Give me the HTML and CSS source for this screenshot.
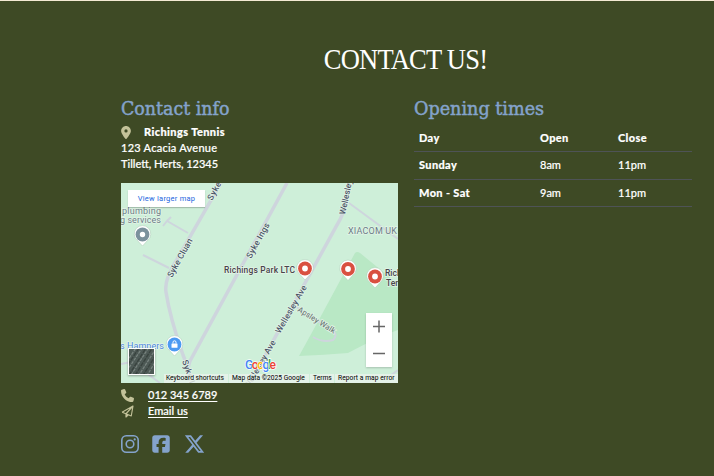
FILE: index.html
```html
<!DOCTYPE html>
<html lang="en">
<head>
<meta charset="utf-8">
<title>Contact us</title>
<link rel="stylesheet" href="styles.css">
</head>
<body>
<section class="contact">
  <h1>CONTACT US!</h1>
  <div class="columns">
    <div class="info">
      <h2 class="info-title">Contact info</h2>
      <address>
        <div class="line"><svg class="icon pin" viewBox="0 0 384 512"><path d="M215.700 499.200C267 435 384 279.400 384 192C384 86 298 0 192 0S0 86 0 192c0 87.400 117 243 168.300 307.200c12.300 15.300 35.100 15.300 47.400 0zM192 128a64 64 0 1 1 0 128 64 64 0 1 1 0-128z"/></svg><strong>Richings Tennis</strong></div>
        <div class="line"><span class="street">123 Acacia Avenue</span></div>
        <div class="line"><span class="town">Tillett, Herts, 12345</span></div>
      </address>
      <div class="map">
        <svg class="map-art" viewBox="121 183 277 200">
          <rect x="121" y="183" width="277" height="200" fill="#ceefd9"/>
          <path d="M355 253q2-2 5 0l38 31v46q-18 6-50 23q-24 2-49 3l22-40z" fill="#b9e8c5"/>
          <g class="roads">
            <path d="M221 183L176 261Q164 280 166 292Q170 318 183 355Q187 365 191 376"/>
            <path d="M287 183L190 361Q186 370 191 383"/>
            <path d="M348 183L347 198Q345 212 337 225L250 383"/>
            <path class="minor" d="M349 203L398 239M188 233L167 221L163 226M167 221L171 217M169 268L143 255M292 304L319 322Q342 332 333 340Q323 343 313 337M121 364l16-3M145 372l15 11M390 376l8-6"/>
          </g>
          <g class="street-name">
            <text transform="translate(212 201) rotate(-61)" textLength="31">Syke Cl</text>
            <text transform="translate(172 278) rotate(-61)" textLength="43">Syke Cluan</text>
            <text transform="translate(251 259) rotate(-61)" textLength="39">Syke Ings</text>
            <text transform="translate(345 215) rotate(-78)" textLength="47">Wellesley Av</text>
            <text transform="translate(280 334) rotate(-60)" textLength="54">Wellesley Ave</text>
            <text transform="translate(249 389) rotate(-60)" textLength="54">Wellesley Ave</text>
            <text transform="translate(182 361) rotate(71)" textLength="39">Syke Ings</text>
            <text class="gray" transform="translate(297 311) rotate(32)" textLength="43">Apsley Walk</text>
          </g>
          <g class="place">
            <text x="122" y="214" textLength="39">plumbing</text>
            <text x="120" y="223" textLength="41">g services</text>
            <text class="xia" x="348" y="234" textLength="49">XIACOM UK</text>
            <text class="dark" x="224" y="273" textLength="71">Richings Park LTC</text>
            <text class="dark" x="385" y="276">Richings</text>
            <text class="dark" x="386" y="286">Tennis</text>
            <text class="blue" x="120" y="349" textLength="44">s Hampers</text>
          </g>
          <defs>
            <g id="marker"><path d="M0 11L-5 5.500A8.300 8.300 0 1 1 5 5.500z" fill="#fff" stroke="#a8c9b2" stroke-width=".5"/><circle r="6.900" cy="-.5"/></g>
          </defs>
          <g fill="#7b919c"><use href="#marker" x="142.500" y="235"/></g>
          <g fill="#d95040"><use href="#marker" x="305" y="269"/><use href="#marker" x="348" y="269.500"/><use href="#marker" x="375" y="277"/></g>
          <g fill="#4c9af2"><use href="#marker" x="174.500" y="345"/></g>
          <g fill="#fff"><circle cx="142.500" cy="234.500" r="2.700"/><circle cx="305" cy="268.500" r="2.900"/><circle cx="348" cy="269" r="2.900"/><circle cx="375" cy="276.500" r="2.900"/><rect x="171.500" y="343.500" width="6" height="4.200" rx=".5"/></g>
          <path d="M173 343.500v-1.200a1.500 1.500 0 0 1 3 0v1.200" fill="none" stroke="#fff"/>
          <text class="google" x="245" y="369" textLength="31"><tspan fill="#4285f4">G</tspan><tspan fill="#ea4335">o</tspan><tspan fill="#fbbc05">o</tspan><tspan fill="#4285f4">g</tspan><tspan fill="#34a853">l</tspan><tspan fill="#ea4335">e</tspan></text>
        </svg>
        <a class="larger">View larger map</a>
        <svg class="satellite" viewBox="0 0 24 24"><path fill="#4d5955" d="M0 0h24v24H0z"/><path d="M-2 12L8-3M-2 21L14-3M2 25L20-3M9 26L25 1M17 26L26 11" stroke="#78837f" stroke-width="1.200" stroke-dasharray="3 1"/><path d="M-1 15L11-3M0 25L17-2M6 25L23-2M13 26L25 7" stroke="#39433f" stroke-width="1.300" stroke-dasharray="4 1"/></svg>
        <div class="zoom"><svg viewBox="0 0 26 54"><path d="M7 13.500h12M13 7.500v12M7 40.500h12" stroke="#666" stroke-width="1.500"/></svg></div>
        <div class="legal"><span class="keys">Keyboard shortcuts</span><span class="data">Map data ©2025 Google</span><span class="terms">Terms</span><span class="report">Report a map error</span></div>
      </div>
      <div class="line link"><svg class="icon phone" viewBox="0 0 512 512"><path transform="matrix(-1 0 0 1 512 0) matrix(-1 0 0 1 512 0)" d="M164.900 24.600c-7.700-18.600-28-28.500-47.400-23.200l-88 24C12.100 30.200 0 46 0 64C0 311.400 200.600 512 448 512c18 0 33.800-12.100 38.600-29.500l24-88c5.300-19.400-4.600-39.700-23.200-47.400l-96-40c-16.300-6.800-35.200-2.100-46.300 11.600L304.700 368C234.300 334.700 177.300 277.700 144 207.300L193.300 167c13.700-11.200 18.400-30 11.600-46.300l-40-96z"/></svg><a class="tel">012 345 6789</a></div>
      <div class="line link"><svg class="icon phone" viewBox="0 0 26 26"><path d="M2 14.500L24 2L20.500 22L10 17.500V24L14.500 19.500M2 14.500L10 17.500L24 2" fill="none" stroke="#c3c299" stroke-width="2.300" stroke-linejoin="round"/></svg><a class="email">Email us</a></div>
      <div class="social">
        <svg viewBox="0 0 18 18"><rect x=".8" y=".8" width="16.400" height="16.400" rx="4.500" fill="none" stroke="#84a3cb" stroke-width="1.600"/><circle cx="9" cy="9" r="3.800" fill="none" stroke="#84a3cb" stroke-width="1.600"/><circle cx="13.700" cy="4.400" r="1.100"/></svg>
        <svg viewBox="0 0 448 512" class="fb"><path d="M64 32C28.700 32 0 60.700 0 96v320c0 35.300 28.700 64 64 64h98.200V334.200h-52.800V256h52.800v-33.700c0-87.100 39.400-127.500 125-127.500c16.200 0 44.200 3.200 55.700 6.400V172c-6-.6-16.500-1-29.600-1c-42 0-58.200 15.900-58.200 57.200V256h83.600l-14.400 78.200h-69.300V480H384c35.300 0 64-28.700 64-64V96c0-35.300-28.700-64-64-64z"/></svg>
        <svg viewBox="30 46 452 420" class="x"><path d="M389.200 48h70.600L305.600 224.200 487 464H345L233.700 318.600 106.500 464H35.800L200.700 275.500 26.800 48h145.600l100.500 132.900zm-24.800 373.800h39.100L151.100 88h-42z"/></svg>
      </div>
    </div>
    <div class="times">
      <h2 class="times-title">Opening times</h2>
      <table>
        <thead><tr><th class="c1">Day</th><th class="c2">Open</th><th>Close</th></tr></thead>
        <tbody>
          <tr><th>Sunday</th><td>8am</td><td>11pm</td></tr>
          <tr><th>Mon - Sat</th><td>9am</td><td>11pm</td></tr>
        </tbody>
      </table>
    </div>
  </div>
</section>
</body>
</html>
```
FILE: styles.css
```css
* { box-sizing: border-box; }
body { margin: 0; height: 476px; overflow: hidden; background: #3e4a25; border-top: 1px solid #f4ead4; color: #fff; font: 11px/16px Lato, "Open Sans", sans-serif; }
.contact { width: 571px; margin-left: 121px; padding-top: 39px; }
h1, h2 { margin: 0; font-family: "Liberation Serif", serif; font-weight: 400; }
h1 { height: 39px; font-size: 30px; line-height: 38px; text-align: center; letter-spacing: -.9px; transform: translateX(-1px) scaleX(.885); }
.columns { display: grid; grid-template-columns: 277px 278px; column-gap: 16px; padding-top: 17px; }
h2 { height: 28px; font: 400 19px/24px "DejaVu Serif Condensed", "DejaVu Serif", serif; font-stretch: condensed; color: #84a3cb; white-space: nowrap; transform-origin: left; -webkit-text-stroke: .45px #84a3cb; }
.info-title { transform: scaleX(1.02); }
.times-title { transform: scaleX(1.03); }
address { font-style: normal; }
.line { display: flex; height: 16px; align-items: center; white-space: nowrap; font-weight: 500; -webkit-text-stroke: .2px #fff; }
.icon { fill: #c3c299; -webkit-text-stroke: 0; }
.pin { width: 10px; height: 13px; margin-right: 13px; }
strong { font-weight: 900; letter-spacing: .4px; }
.street { letter-spacing: .25px; }
.map { position: relative; width: 277px; height: 200px; margin: 11px 0 4px; overflow: hidden; font-family: Roboto, sans-serif; }
.map-art { display: block; width: 277px; height: 200px; }
.roads path { fill: none; stroke: #ced5dd; stroke-width: 3.5; }
.roads .minor { stroke-width: 2; }
.map text { font-family: Roboto, sans-serif; font-size: 9px; paint-order: stroke; stroke: #e4f5e8; stroke-width: 1.300px; }
.street-name text { fill: #4b5467; font-weight: 500; font-size: 8.500px; }
.street-name .gray { fill: #71807c; font-size: 8px; }
.place text { fill: #6c7c87; }
.place .dark { fill: #49444a; font-weight: 500; font-size: 8.500px; }
.place .blue { fill: #4d86e2; }
.map .google { font-size: 12px; font-weight: 500; stroke: #fff; }
.larger { position: absolute; left: 7px; top: 7px; width: 77px; height: 17px; background: #fff; color: #1b66de; font-size: 7.500px; line-height: 17px; text-align: center; letter-spacing: .25px; box-shadow: 0 1px 1px #0003; }
.satellite { position: absolute; left: 7px; top: 165px; width: 27px; height: 27px; border: 1.500px solid #fff; box-shadow: 0 1px 2px #0005; }
.zoom { position: absolute; left: 245px; top: 130px; width: 26px; height: 54px; background: #fff; box-shadow: 0 1px 2px #0003; }
.zoom svg { display: block; }
.legal { position: absolute; right: 0; bottom: 0; display: flex; height: 9px; width: 234px; color: #000; font-size: 6.700px; line-height: 9px; white-space: nowrap; }
.legal span { background: #eaf3ebcc; padding-left: 3px; border-right: 1px solid #ceefd9; }
.keys { width: 65px; }
.legal .keys { padding-left: 2px; }
.data { width: 81px; }
.terms { width: 25px; padding-left: 4px; }
.legal .report { width: 63px; border: 0; letter-spacing: .04px; }
.link .icon { width: 13px; height: 13px; margin-right: 14px; }
.link a { text-decoration: underline; text-underline-offset: 1.500px; }
.social { display: flex; align-items: center; margin-top: 16px; height: 18px; fill: #84a3cb; }
.social svg { width: 18px; height: 18px; }
.social .fb { width: 18px; height: 20px; margin-left: 13px; }
.social .x { width: 19px; margin-left: 15px; }
table { width: 278px; border-collapse: collapse; table-layout: fixed; margin-top: 0; }
tr { height: 27.500px; border-bottom: 1px solid #4e5356; }
th, td { padding: 0 0 0 5px; text-align: left; font-weight: 500; -webkit-text-stroke: .15px #fff; }
th { font-weight: 900; letter-spacing: .35px; }
.c1 { width: 121px; }
.c2 { width: 78px; }
```
